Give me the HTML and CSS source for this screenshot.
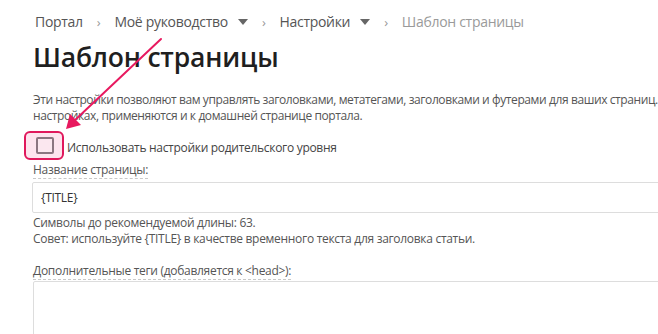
FILE: index.html
```html
<!DOCTYPE html>
<html lang="ru">
<head>
    <meta charset="UTF-8">
    <meta name="viewport" content="width=device-width, initial-scale=1.0">
    <title>Шаблон страницы</title>
    <link rel="stylesheet" href="styles.css">
</head>
<body>
    <main class="page">
        <nav class="breadcrumb">
            <a class="crumb" href="#">Портал</a>
            <span class="sep">›</span>
            <a class="crumb" href="#">Моё руководство <span class="caret"></span></a>
            <span class="sep">›</span>
            <a class="crumb" href="#">Настройки <span class="caret"></span></a>
            <span class="sep">›</span>
            <span class="crumb current">Шаблон страницы</span>
        </nav>

        <h1 class="title">Шаблон страницы</h1>

        <p class="intro">Эти настройки позволяют вам управлять заголовками, метатегами, заголовками и футерами для ваших страниц. Значения, заданные в родительских<br>настройках, применяются и к домашней странице портала.</p>

        <div class="check-row">
            <span class="check-highlight">
                <input type="checkbox" class="check" id="use-parent">
            </span>
            <label for="use-parent">Использовать настройки родительского уровня</label>
        </div>

        <div class="field">
            <label class="field-label" for="page-title">Название страницы:</label>
            <input type="text" class="text-input" id="page-title" value="{TITLE}">
            <div class="hint">Символы до рекомендуемой длины: 63.</div>
            <div class="hint">Совет: используйте {TITLE} в качестве временного текста для заголовка статьи.</div>
        </div>

        <div class="field field-tags">
            <label class="field-label" for="head-tags">Дополнительные теги (добавляется к &lt;head&gt;):</label>
            <textarea class="text-area" id="head-tags"></textarea>
        </div>
    </main>

    <!-- стрелка-подсказка -->
    <svg class="pointer" width="180" height="140" viewBox="0 0 180 140">
        <line x1="161" y1="39" x2="74" y2="121" stroke="#e8195f" stroke-width="2" stroke-linecap="round"/>
        <polygon points="66,129 70,114 81,125" fill="#e8195f"/>
    </svg>
</body>
</html>
```

FILE: styles.css
```css
* {
    box-sizing: border-box;
    margin: 0;
    padding: 0;
}

html, body {
    height: 100%;
}

body {
    font-family: 'Open Sans', 'Noto Sans', sans-serif;
    color: #555;
    background-color: #fff;
    overflow: hidden;
    position: relative;
    letter-spacing: -0.3px;
}

.page {
    width: 1000px;
    padding: 12px 0 0 33px;
}

.breadcrumb {
    display: flex;
    align-items: center;
    gap: 14px;
    font-size: 14px;
    line-height: 20px;
    padding-left: 2px;
    letter-spacing: -0.3px;
}

.crumb {
    color: #555;
    text-decoration: none;
    display: flex;
    align-items: center;
    gap: 6px;
}

.crumb.current {
    color: #9a9a9a;
}

.sep {
    color: #999;
    font-size: 13px;
}

.caret {
    width: 0;
    height: 0;
    border-left: 5px solid transparent;
    border-right: 5px solid transparent;
    border-top: 6px solid #666;
    margin-left: 4px;
}

.title {
    font-size: 26.5px;
    font-weight: 600;
    color: #1f1f1f;
    line-height: 36px;
    margin-top: 7px;
    letter-spacing: -0.2px;
}

.intro {
    font-size: 12px;
    line-height: 16px;
    letter-spacing: -0.4px;
    color: #555;
    white-space: nowrap;
    margin-top: 17px;
}

.check-row {
    display: flex;
    align-items: center;
    gap: 3px;
    margin-top: 7px;
    margin-left: -9px;
    font-size: 12px;
    color: #444;
}

.check-highlight {
    width: 40px;
    height: 29px;
    border: 2px solid #e0185c;
    border-radius: 6px;
    background-color: #fde4ee;
    display: flex;
    align-items: center;
    justify-content: center;
}

.check {
    appearance: none;
    width: 18px;
    height: 17px;
    border: 2px solid #8b7580;
    border-radius: 2px;
    background-color: #fbe7ef;
    margin-left: 2px;
}

.check-row label {
    padding-top: 3px;
}

.field {
    display: flex;
    flex-direction: column;
    align-items: flex-start;
    margin-top: 2px;
}

.field-label {
    font-size: 12px;
    line-height: 16px;
    color: #555;
    border-bottom: 1px dashed #c8c8c8;
}

.text-input {
    width: 800px;
    height: 31px;
    margin-top: 3px;
    margin-left: -1px;
    border: 1px solid #ddd;
    border-radius: 2px;
    padding: 0 8px;
    font-family: inherit;
    font-size: 12px;
    letter-spacing: -0.3px;
    color: #333;
}

.hint {
    font-size: 12px;
    line-height: 16px;
    color: #555;
}

.hint:first-of-type {
    margin-top: 2px;
}

.field-tags {
    margin-top: 16px;
}

.text-area {
    width: 800px;
    height: 80px;
    margin-top: 1px;
    border: 1px solid #ddd;
    border-radius: 2px;
    resize: none;
}

.pointer {
    position: absolute;
    left: 0;
    top: 0;
}
```
